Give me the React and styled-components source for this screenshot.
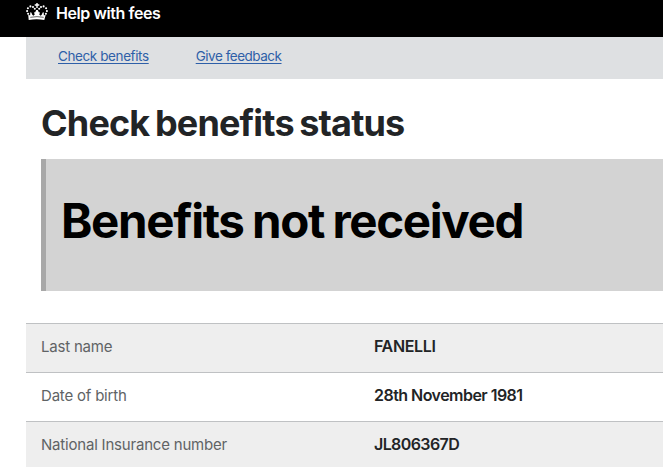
import React from "react";
import styled, { createGlobalStyle } from "styled-components";

const GlobalStyle = createGlobalStyle`
  html, body { margin: 0; padding: 0; background: #fff; overflow: hidden; }
  body { font-family: Inter, "Liberation Sans", sans-serif; color: #222426; }
  * { box-sizing: border-box; }
`;

const Page = styled.div`
  height: 467px;
  overflow: hidden;
  white-space: nowrap;
`;

const Header = styled.header`
  height: 37px;
  padding: 3px 0 0 26px;
  display: flex;
  align-items: flex-start;
  background: #000;
  color: #fff;
`;

const Crown = styled.svg`
  width: 22px;
  height: 18px;
  flex: none;
`;

const Product = styled.span`
  margin-left: 8px;
  font-size: 16px;
  line-height: 20px;
  font-weight: 600;
  letter-spacing: -0.42px;
`;

const Nav = styled.nav`
  height: 42px;
  margin-left: 26px;
  padding: 9px 32px 0;
  display: flex;
  gap: 47px;
  background: #dee0e2;
`;

const NavLink = styled.a`
  height: 20px;
  font-size: 13.5px;
  line-height: 20px;
  color: #2e5fa8;
  letter-spacing: ${(p) => p.$tracking}px;
  text-decoration: underline;
  text-underline-offset: 2px;
`;

const Title = styled.h1`
  margin: 23px 0 0 41px;
  height: 57px;
  font-size: 36px;
  line-height: 42px;
  font-weight: 700;
  letter-spacing: -0.83px;
  word-spacing: -2.2px;
`;

const Panel = styled.section`
  height: 132px;
  margin-left: 41px;
  padding: 32px 0 0 15px;
  border-left: 5px solid #a8a8a8;
  background: #d3d3d3;
`;

const Outcome = styled.h2`
  margin: 0;
  font-size: 47.5px;
  line-height: 60px;
  font-weight: 700;
  letter-spacing: -1.35px;
  word-spacing: -1.5px;
  color: #000;
`;

const Summary = styled.dl`
  margin: 32px 0 0 26px;
`;

const Row = styled.div`
  height: 49px;
  padding: 12px 0 0 15px;
  display: grid;
  grid-template-columns: 333px 1fr;
  align-items: start;
  border-top: 1px solid #bfc1c3;
  background: ${(p) => (p.$shaded ? "#eee" : "#fff")};
  line-height: 20px;
`;

const Term = styled.dt`
  padding-top: 1px;
  font-size: 15px;
  color: #606365;
  letter-spacing: -0.2px;
`;

const Value = styled.dd`
  margin: 0;
  font-size: 16px;
  font-weight: 600;
  letter-spacing: ${(p) => p.$tracking}px;
`;

const crownPearls = [
  [1.1, 8.1], [1.9, 5.3], [4.4, 3.4], [7, 4], [8.8, 5.8],
  [20.9, 8.1], [20.1, 5.3], [17.6, 3.4], [15, 4], [13.2, 5.8],
  [2.1, 10.7], [19.9, 10.7],
];

const details = [
  { term: "Last name", value: "FANELLI", tracking: -0.35 },
  { term: "Date of birth", value: "28th November 1981", tracking: -0.53 },
  { term: "National Insurance number", value: "JL806367D", tracking: -0.6 },
];

export default function App() {
  return (
    <Page>
      <GlobalStyle />
      <Header>
        <Crown viewBox="0 0 22 18" fill="#fff" aria-hidden="true">
          <path d="M10.300 0h1.400v1.300h1.600v1.500h-1.600v2.200h-1.400V2.800H8.700V1.300h1.600z" />
          {crownPearls.map(([x, y]) => (
            <circle key={`${x}-${y}`} cx={x} cy={y} r="1.05" />
          ))}
          <path d="M2.200 11.600l1.900 1 .2-3.300 1 .1 1 2.400 1 .9 1.500-1.200-.9-1.900 1.300-.3 1-2.200h1.600l1 2.200 1.300.3-.9 1.900 1.500 1.200 1-.9 1-2.400 1-.1.2 3.300 1.900-1-1.500 5.400q-7.600-1.600-15.600 0z" />
          <path d="M4.300 14.300q6.700-1.300 13.400 0" fill="none" stroke="#000" strokeWidth="0.6" />
        </Crown>
        <Product>Help with fees</Product>
      </Header>
      <Nav>
        <NavLink $tracking={-0.4}>Check benefits</NavLink>
        <NavLink $tracking={-0.48}>Give feedback</NavLink>
      </Nav>
      <Title>Check benefits status</Title>
      <Panel>
        <Outcome>Benefits not received</Outcome>
      </Panel>
      <Summary>
        {details.map((d, i) => (
          <Row key={d.term} $shaded={i % 2 === 0}>
            <Term>{d.term}</Term>
            <Value $tracking={d.tracking}>{d.value}</Value>
          </Row>
        ))}
      </Summary>
    </Page>
  );
}
